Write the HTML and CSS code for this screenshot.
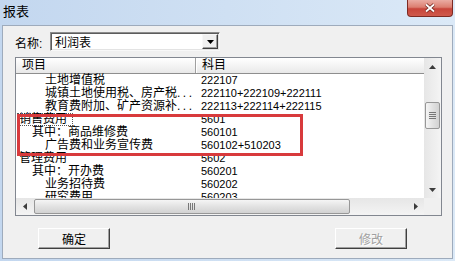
FILE: index.html
```html
<!DOCTYPE html>
<html lang="zh-CN">

<head>
    <meta charset="UTF-8">
    <title>报表</title>
    <link rel="stylesheet" href="styles.css">
</head>

<body>
    <div class="window">
        <div class="titlebar">
            <span class="title">报表</span>
            <div class="close">
                <svg width="12" height="10" viewBox="0 0 12 10">
                    <path d="M2 1.5L10 8.5M10 1.5L2 8.5" stroke="#6e231c" stroke-width="3.4" fill="none" />
                    <path d="M2 1.5L10 8.5M10 1.5L2 8.5" stroke="#fff" stroke-width="1.8" fill="none" />
                </svg>
            </div>
        </div>

        <div class="panel">
            <div class="name-row">
                <label>名称:</label>
                <div class="combo">
                    <span class="combo-text">利润表</span>
                    <span class="drop">
                        <svg width="7" height="4" viewBox="0 0 7 4"><path d="M0 0h7L3.5 4z" fill="#000" /></svg>
                    </span>
                </div>
            </div>

            <div class="list">
                <div class="view">
                    <div class="head">
                        <div class="c1">项目</div>
                        <div class="c2">科目</div>
                    </div>
                    <div class="row"><div class="c1 lv2">土地增值税</div><div class="c2">222107</div></div>
                    <div class="row"><div class="c1 lv2">城镇土地使用税、房产税<span class="more">...</span></div><div class="c2">222110+222109+222111</div></div>
                    <div class="row"><div class="c1 lv2">教育费附加、矿产资源补<span class="more">...</span></div><div class="c2">222113+222114+222115</div></div>
                    <div class="row"><div class="c1 lv0"><span class="focus">销售费用</span></div><div class="c2">5601</div></div>
                    <div class="row"><div class="c1 lv1">其中：商品维修费</div><div class="c2">560101</div></div>
                    <div class="row"><div class="c1 lv2">广告费和业务宣传费</div><div class="c2">560102+510203</div></div>
                    <div class="row"><div class="c1 lv0">管理费用</div><div class="c2">5602</div></div>
                    <div class="row"><div class="c1 lv1">其中：开办费</div><div class="c2">560201</div></div>
                    <div class="row"><div class="c1 lv2">业务招待费</div><div class="c2">560202</div></div>
                    <div class="row"><div class="c1 lv2">研究费用</div><div class="c2">560203</div></div>
                </div>

                <div class="vscroll">
                    <div class="arrow"><svg width="7" height="4" viewBox="0 0 7 4"><path d="M0 4h7L3.5 0z" fill="#3c3c3c" /></svg></div>
                    <div class="vthumb">
                        <svg width="7" height="8" viewBox="0 0 7 8"><path d="M0 .5h7M0 2.5h7M0 4.5h7M0 6.5h7" stroke="#777" stroke-width="1" /></svg>
                    </div>
                    <div class="fill"></div>
                    <div class="arrow"><svg width="7" height="4" viewBox="0 0 7 4"><path d="M0 0h7L3.5 4z" fill="#3c3c3c" /></svg></div>
                </div>

                <div class="hscroll">
                    <div class="arrow"><svg width="4" height="7" viewBox="0 0 4 7"><path d="M4 0v7L0 3.5z" fill="#3c3c3c" /></svg></div>
                    <div class="hthumb">
                        <svg width="8" height="7" viewBox="0 0 8 7"><path d="M.5 0v7M2.5 0v7M4.5 0v7M6.5 0v7" stroke="#777" stroke-width="1" /></svg>
                    </div>
                    <div class="fill"></div>
                    <div class="arrow"><svg width="4" height="7" viewBox="0 0 4 7"><path d="M0 0v7L4 3.5z" fill="#3c3c3c" /></svg></div>
                </div>

                <div class="corner"></div>
            </div>

            <div class="buttons">
                <div class="btn">确定</div>
                <div class="btn disabled">修改</div>
            </div>
        </div>

        <!-- red highlight drawn over the list -->
        <div class="mark"></div>
    </div>
</body>

</html>
```

FILE: styles.css
```css
/* dialog window */
body {
    margin: 0;
    font-family: "Liberation Sans", "Noto Sans CJK SC", sans-serif;
    font-size: 12px;
    color: #000;
}

.window {
    position: relative;
    width: 455px;
    height: 261px;
    display: flex;
    flex-direction: column;
    overflow: hidden;
    background: linear-gradient(to right, #c3d7ef, #dbe9f7);
}

.titlebar {
    flex: none;
    height: 25px;
    display: flex;
    justify-content: space-between;
    align-items: flex-start;
}

.title {
    padding: 4px 0 0 3px;
    line-height: 16px;
    font-size: 13px;
}

/*close button*/
.close {
    width: 46px;
    height: 17px;
    margin-right: 2px;
    box-sizing: border-box;
    border: 1px solid #7d2a22;
    border-top: none;
    border-radius: 0 0 4px 4px;
    background: linear-gradient(#eaaca3 0%, #dc7e70 45%, #c8453a 55%, #cf5a4c 100%);
    display: flex;
    align-items: center;
    justify-content: center;
}

.panel {
    flex: 1;
    margin: 0 2px 2px 2px;
    border: 1px solid #9eabbc;
    background: #f0f0f0;
    padding: 6px 0 0 12px;
}

.name-row {
    display: flex;
    align-items: center;
    height: 19px;
}

.name-row label {
    width: 35px;
    padding-top: 2px;
}

.combo {
    width: 170px;
    height: 19px;
    box-sizing: border-box;
    border: 1px solid;
    border-color: #8c8c8c #f8f8f8 #f8f8f8 #8c8c8c;
    box-shadow: inset 1px 1px #5c5c5c, inset -1px -1px #e3e3e3;
    background: #fff;
    display: flex;
    align-items: center;
    justify-content: space-between;
}

.combo-text {
    padding-left: 4px;
}

.drop {
    width: 16px;
    height: 15px;
    margin-right: 1px;
    box-sizing: border-box;
    background: #f0f0f0;
    border: 1px solid;
    border-color: #f8f8f8 #3f3f3f #3f3f3f #f8f8f8;
    box-shadow: inset -1px -1px #a0a0a0;
    display: flex;
    align-items: center;
    justify-content: center;
}

/* list view */
.list {
    margin-top: 6px;
    width: 427px;
    height: 159px;
    box-sizing: border-box;
    border: 1px solid #828790;
    background: #fff;
    display: grid;
    grid-template-columns: 1fr 17px;
    grid-template-rows: 1fr 17px;
}

.view {
    overflow: hidden;
}

.head {
    display: flex;
    height: 16px;
    box-sizing: border-box;
    border-bottom: 1px solid #8e8e8e;
    background: linear-gradient(#ffffff, #f2f2f2 60%, #e8e8e8);
    line-height: 15px;
}

.head .c1 {
    width: 180px;
    box-sizing: border-box;
    border-right: 1px solid #9f9f9f;
    padding-left: 6px;
}

.head .c2 {
    flex: 1;
    padding-left: 5px;
    border-left: 1px solid #fff;
}

.row {
    display: flex;
    height: 13px;
    line-height: 13px;
}

.row .c1 {
    width: 180px;
    box-sizing: border-box;
    white-space: nowrap;
}

.more {
    letter-spacing: 2.5px;
}

.row .c2 {
    padding-left: 5px;
    font-size: 11px;
}

.lv0 {
    padding-left: 3px;
}

.lv1 {
    padding-left: 16px;
}

.lv2 {
    padding-left: 29px;
}

.focus {
    display: inline-block;
    height: 13px;
    box-sizing: border-box;
    line-height: 11px;
    margin-left: -2px;
    padding: 0 5px 0 1px;
    border: 1px dotted #555;
}

/* scrollbars */
.vscroll,
.hscroll {
    display: flex;
}

.vscroll {
    flex-direction: column;
    background: linear-gradient(to right, #e6e6e6, #f4f4f4);
}

.hscroll {
    background: linear-gradient(#e6e6e6, #f4f4f4);
}

.arrow {
    flex: none;
    width: 17px;
    height: 17px;
    display: flex;
    align-items: center;
    justify-content: center;
}

.fill {
    flex: 1;
}

.vthumb {
    flex: none;
    height: 27px;
    margin: 27px 1px 0 1px;
    box-sizing: border-box;
    border: 1px solid #979797;
    border-radius: 2px;
    background: linear-gradient(to right, #f5f5f5, #e2e2e2 50%, #d2d2d2);
    display: flex;
    align-items: center;
    justify-content: center;
}

.hthumb {
    flex: none;
    width: 316px;
    margin: 1px 0 1px 1px;
    box-sizing: border-box;
    border: 1px solid #979797;
    border-radius: 2px;
    background: linear-gradient(#f5f5f5, #e2e2e2 50%, #d2d2d2);
    display: flex;
    align-items: center;
    justify-content: center;
}

.corner {
    background: #f0f0f0;
}

/* buttons */
.buttons {
    display: flex;
    justify-content: space-between;
    width: 427px;
    box-sizing: border-box;
    padding: 0 35px 0 23px;
    margin-top: 12px;
}

.btn {
    width: 72px;
    height: 21px;
    box-sizing: border-box;
    background: #f0f0f0;
    border: 1px solid;
    border-color: #ffffff #3f3f3f #3f3f3f #ffffff;
    box-shadow: inset -1px -1px #a0a0a0;
    display: flex;
    align-items: center;
    justify-content: center;
}

.disabled {
    color: #a0a0a0;
    text-shadow: 1px 1px #fff;
}

.mark {
    position: absolute;
    left: 17px;
    top: 114px;
    width: 286px;
    height: 42px;
    box-sizing: border-box;
    border: 3px solid #d83a3c;
}
```
